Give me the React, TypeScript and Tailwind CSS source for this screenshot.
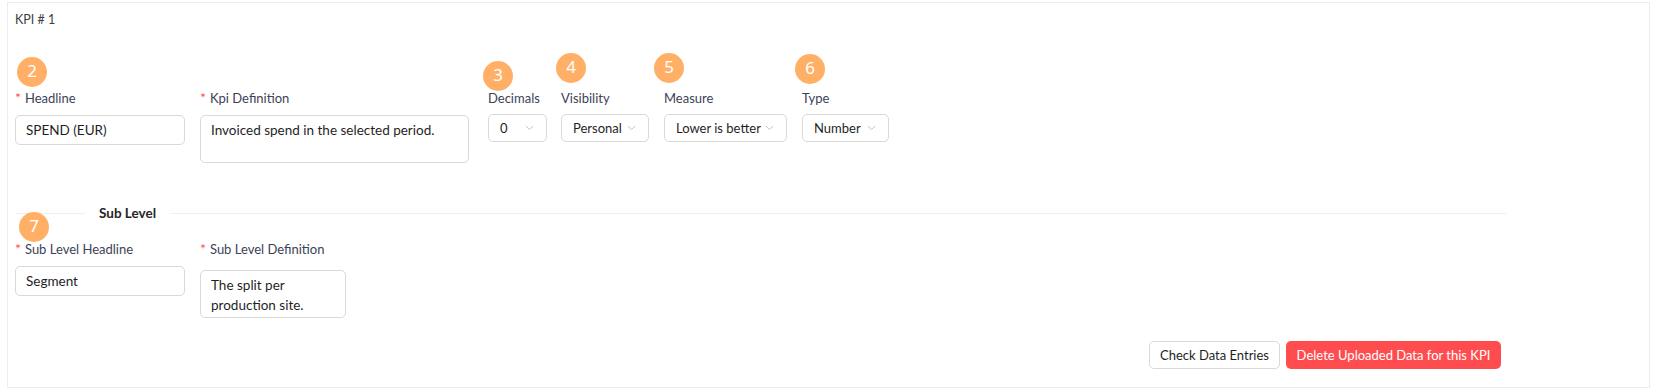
import React from "react";

const font = { fontFamily: 'Lato, "Noto Sans", "Liberation Sans", sans-serif' };

function Badge({ n, className }: { n: number; className: string }) {
  return (
    <div
      className={`absolute flex h-[30px] w-[30px] items-center justify-center rounded-full bg-[#ffb066] pb-[3px] text-[17px] leading-none text-white ${className}`}
      style={{ fontFamily: '"Noto Sans", sans-serif' }}
    >
      {n}
    </div>
  );
}

function Chevron() {
  return (
    <svg width="9" height="6" viewBox="0 0 9 6" fill="none" className="shrink-0">
      <path d="M0.8 0.8 L4.5 4.6 L8.2 0.8" stroke="#c4c4c4" strokeWidth="1" />
    </svg>
  );
}

function Label({ text, required }: { text: string; required?: boolean }) {
  return (
    <div className="flex h-[20px] items-center whitespace-nowrap text-[13px] leading-[20px] text-[#3c4257]">
      {required && <span className="mr-[4px] text-[14px] text-[#ff4d4f]">*</span>}
      <span>{text}</span>
    </div>
  );
}

function Select({ value, width }: { value: string; width: string }) {
  return (
    <div
      className={`mt-[6px] flex h-[28px] items-center justify-between whitespace-nowrap rounded-[5px] border border-[#d9d9d9] bg-white pl-[11px] pr-[12px] text-[13px] leading-[20px] text-[#1f1f1f] ${width}`}
    >
      <span>{value}</span>
      <Chevron />
    </div>
  );
}

export default function App() {
  return (
    <div className="relative h-[392px] w-[1654px] bg-white" style={font}>
      <div className="ml-[7px] mt-[2px] h-[386px] w-[1643px] border border-[#ececec] pl-[7px]">
        <div className="mt-[7px] text-[12.5px] leading-[20px] text-[#404040]">KPI # 1</div>

        <div className="w-[1491px]">
          {/* Row 1 */}
          <div className="mt-[58px] flex items-start">
            <div className="w-[170px]">
              <Label text="Headline" required />
              <div className="mt-[7px] h-[30px] whitespace-nowrap rounded-[5px] border border-[#d9d9d9] px-[10px] py-[4px] text-[13.5px] leading-[20px] text-[#1f1f1f]">
                SPEND (EUR)
              </div>
            </div>
            <div className="ml-[15px] w-[269px]">
              <Label text="Kpi Definition" required />
              <div className="mt-[7px] h-[48px] whitespace-nowrap rounded-[5px] border border-[#d9d9d9] px-[10px] pt-[4px] text-[13.5px] leading-[20px] text-[#1f1f1f]">
                Invoiced spend in the selected period.
              </div>
            </div>
            <div className="ml-[19px]">
              <Label text="Decimals" />
              <Select value="0" width="w-[59px]" />
            </div>
            <div className="ml-[14px]">
              <Label text="Visibility" />
              <Select value="Personal" width="w-[88px]" />
            </div>
            <div className="ml-[15px]">
              <Label text="Measure" />
              <Select value="Lower is better" width="w-[123px]" />
            </div>
            <div className="ml-[15px]">
              <Label text="Type" />
              <Select value="Number" width="w-[87px]" />
            </div>
          </div>

          {/* Divider */}
          <div className="mt-[40px] flex h-[20px] items-center">
            <div className="h-px w-[70px] bg-[#f0f0f0]" />
            <div className="whitespace-nowrap px-[14px] text-[13.5px] font-bold leading-[20px] text-[#262626]">Sub Level</div>
            <div className="h-px flex-1 bg-[#f0f0f0]" />
          </div>

          {/* Row 2 */}
          <div className="mt-[16px] flex items-start">
            <div className="w-[170px]">
              <Label text="Sub Level Headline" required />
              <div className="mt-[7px] h-[30px] whitespace-nowrap rounded-[5px] border border-[#d9d9d9] px-[10px] py-[4px] text-[13.5px] leading-[20px] text-[#1f1f1f]">
                Segment
              </div>
            </div>
            <div className="ml-[15px]">
              <Label text="Sub Level Definition" required />
              <div className="mt-[11px] h-[48px] w-[146px] whitespace-nowrap rounded-[5px] border border-[#d9d9d9] px-[10px] pt-[4px] text-[13.5px] leading-[20px] text-[#1f1f1f]">
                <div>The split per</div>
                <div>production site.</div>
              </div>
            </div>
          </div>

          {/* Buttons */}
          <div className="mr-[5px] mt-[23px] flex justify-end gap-[6px]">
            <div className="flex h-[28px] w-[131px] items-center justify-center whitespace-nowrap rounded-[5px] border border-[#d9d9d9] bg-white text-[13px] leading-[20px] text-[#1f1f1f]">
              Check Data Entries
            </div>
            <div className="flex h-[28px] w-[215px] items-center justify-center whitespace-nowrap rounded-[5px] bg-[#ff4d4f] text-[13px] leading-[20px] text-white">
              Delete Uploaded Data for this KPI
            </div>
          </div>
        </div>
      </div>

      <Badge n={2} className="left-[17px] top-[55px]" />
      <Badge n={3} className="left-[483px] top-[59px]" />
      <Badge n={4} className="left-[556px] top-[51px]" />
      <Badge n={5} className="left-[654px] top-[51px]" />
      <Badge n={6} className="left-[795px] top-[52px]" />
      <Badge n={7} className="left-[19px] top-[210px]" />
    </div>
  );
}
